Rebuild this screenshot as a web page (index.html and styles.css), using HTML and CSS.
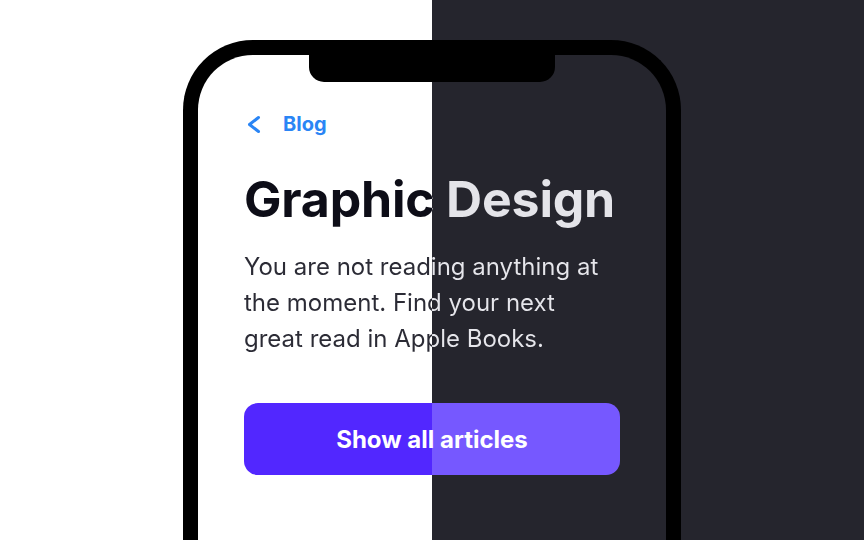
FILE: index.html
```html
<!DOCTYPE html>
<html lang="en">
<head>
  <meta charset="UTF-8" />
  <meta name="viewport" content="width=device-width, initial-scale=1.0"/>
  <title>Graphic Design</title>
  <link rel="stylesheet" href="styles.css">
</head>
<body>

  <div class="stage">
    <div class="phone">
      <div class="notch"></div>

      <div class="screen">
        <a class="back" href="#">
          <svg class="back-icon" width="20" height="24" viewBox="0 0 20 24" aria-hidden="true">
            <path d="M14.5 5.5 L5.5 12.5 L14.5 19.5" fill="none" stroke="currentColor" stroke-width="3" stroke-linecap="round" stroke-linejoin="round"/>
          </svg>
          <span>Blog</span>
        </a>

        <h1 class="title">Graphic Design</h1>

        <p class="lead">You are not reading anything at the moment. Find your next great read in Apple Books.</p>

        <button class="cta" type="button">Show all articles</button>
      </div>
    </div>
  </div>

</body>
</html>
```

FILE: styles.css
```css
* {
  box-sizing: border-box;
}
html, body {
  margin: 0;
  height: 540px;
  overflow: hidden;
}
body {
  font-family: Inter, "Noto Sans", Arial, sans-serif;
  background: linear-gradient(90deg, #ffffff 50%, #25252d 50%);
}
.stage {
  display: flex;
  justify-content: center;
  padding-top: 40px;
}
/* phone runs off the bottom of the frame, so no bottom edge */
.phone {
  position: relative;
  width: 498px;
  height: 500px;
  border: 15px solid #000;
  border-bottom: none;
  border-radius: 70px 70px 0 0;
  background: linear-gradient(90deg, #ffffff 50%, #25252d 50%);
}
.notch {
  position: absolute;
  top: 0;
  left: 50%;
  width: 246px;
  height: 27px;
  margin-left: -123px;
  background: #000;
  border-radius: 0 0 15px 15px;
}
.screen {
  display: flex;
  flex-direction: column;
  align-items: flex-start;
  padding: 57px 46px 0;
}
.back {
  display: flex;
  align-items: center;
  gap: 19px;
  height: 24px;
  color: #2a85f5;
  font-size: 20px;
  font-weight: 700;
  line-height: 24px;
  text-decoration: none;
}
.back-icon {
  display: block;
}
.title {
  margin: 33px 0 0;
  font-size: 50px;
  font-weight: 700;
  line-height: 60px;
  letter-spacing: -0.2px;
  background: linear-gradient(90deg, #0d0d17 188px, #e4e4e9 188px);
  -webkit-background-clip: text;
  background-clip: text;
  color: transparent;
}
.lead {
  max-width: 362px;
  margin: 20px 0 0;
  font-size: 24px;
  line-height: 36px;
  background: linear-gradient(90deg, #2b2b35 188px, #e6e6eb 188px);
  -webkit-background-clip: text;
  background-clip: text;
  color: transparent;
}
.cta {
  width: 100%;
  height: 72px;
  margin-top: 46px;
  border: none;
  border-radius: 14px;
  background: linear-gradient(90deg, #5227ff 188px, #7658ff 188px);
  color: #fff;
  font-family: inherit;
  font-size: 24px;
  font-weight: 700;
  cursor: pointer;
}
```
